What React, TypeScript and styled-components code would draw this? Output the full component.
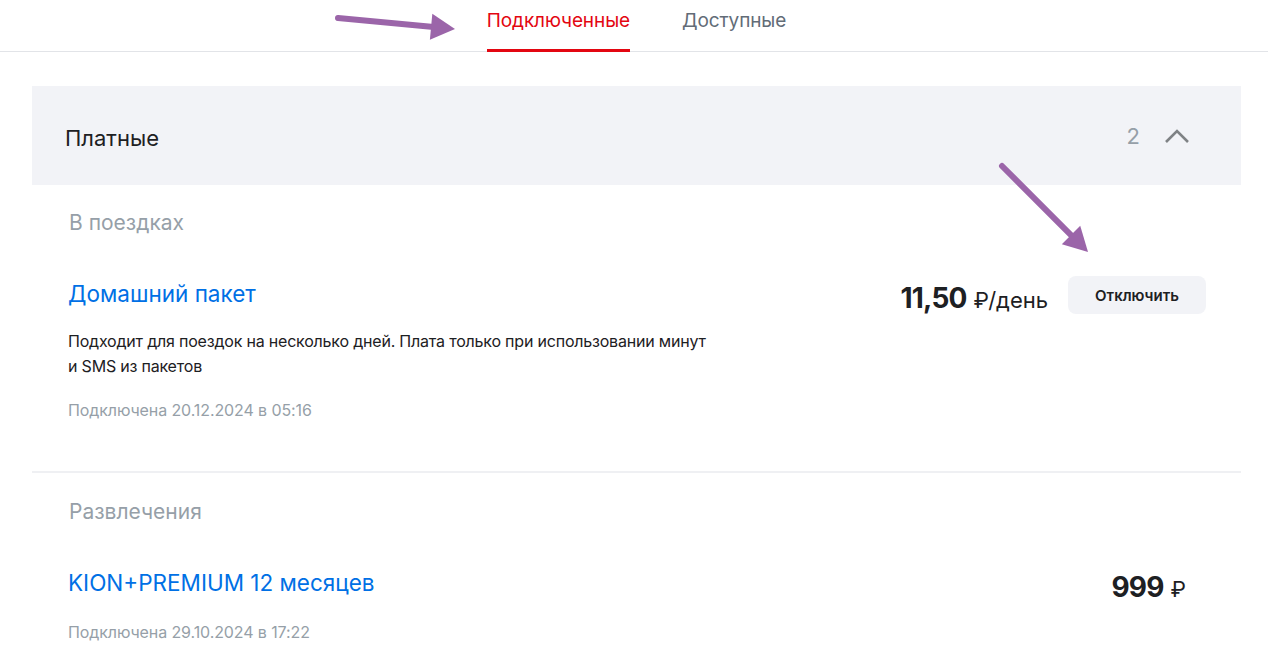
import React from 'react';
import styled, { createGlobalStyle } from 'styled-components';

const GlobalStyle = createGlobalStyle`
  html, body {
    margin: 0;
    padding: 0;
    background: #fff;
    font-family: 'Inter', 'Roboto', sans-serif;
    color: #1d2023;
  }
`;

const Page = styled.div`
  position: relative;
  width: 1268px;
  height: 659px;
  overflow: hidden;
`;

const TabBar = styled.div`
  display: flex;
  justify-content: center;
  gap: 52px;
  height: 51px;
  padding-left: 5px;
  border-bottom: 1px solid #e2e4e8;
`;

const Tab = styled.div<{ $active?: boolean }>`
  display: flex;
  align-items: flex-start;
  padding-top: 9px;
  box-sizing: border-box;
  height: 52px;
  margin-bottom: -1px;
  font-size: 19px;
  letter-spacing: -0.1px;
  color: ${({ $active }) => ($active ? '#e30611' : '#626c77')};
  border-bottom: 3px solid ${({ $active }) => ($active ? '#e30611' : 'transparent')};
`;

const Content = styled.div`
  padding: 34px 27px 0 32px;
`;

const GroupHeader = styled.div`
  display: flex;
  align-items: center;
  height: 99px;
  padding: 0 51px 0 33px;
  background: #f2f3f7;
`;

const GroupTitle = styled.div`
  flex: 1;
  font-size: 22px;
  padding-top: 4px;
  color: #1d2023;
`;

const Count = styled.span`
  font-size: 22px;
  color: #969fa8;
  margin-right: 24px;
`;

const Section = styled.div<{ $divider?: boolean }>`
  padding: ${({ $divider }) => ($divider ? 26 : 25)}px 35px 0 36px;
  border-top: ${({ $divider }) => ($divider ? '2px solid #eff0f3' : 'none')};
`;

const SectionTitle = styled.div`
  font-size: 21px;
  color: #969fa8;
  height: 28px;
  margin-left: 1px;
`;

const Item = styled.div<{ $bottom: number }>`
  padding-bottom: ${({ $bottom }) => $bottom}px;
`;

const ItemRow = styled.div<{ $top: number }>`
  display: flex;
  align-items: flex-start;
  margin-top: ${({ $top }) => $top}px;
`;

const ItemName = styled.div`
  flex: 1;
  font-size: 22.5px;
  color: #0070e5;
  line-height: 30px;
  padding-top: 4px;
`;

const Price = styled.div<{ $right?: number }>`
  display: flex;
  align-items: baseline;
  gap: 7px;
  margin-top: 6px;
  margin-right: ${({ $right }) => $right ?? 0}px;
`;

const Amount = styled.span`
  font-size: 28px;
  font-weight: 700;
  letter-spacing: -0.8px;
  color: #1d2023;
`;

const Unit = styled.span`
  font-size: 22px;
  color: #1d2023;
`;

const OffButton = styled.button`
  margin-left: 20px;
  margin-top: 1px;
  width: 138px;
  height: 38px;
  border: none;
  border-radius: 8px;
  background: #f2f3f7;
  font-family: 'Inter', 'Roboto', sans-serif;
  font-size: 15px;
  font-weight: 600;
  color: #1d2023;
  cursor: pointer;
`;

const Description = styled.div`
  margin-top: 14px;
  font-size: 16px;
  line-height: 25px;
  color: #1d2023;
  max-width: 650px;
  letter-spacing: -0.2px;
`;

const DateText = styled.div<{ $top: number }>`
  margin-top: ${({ $top }) => $top}px;
  font-size: 16px;
  color: #969fa8;
  letter-spacing: -0.1px;
`;

const Overlay = styled.svg`
  position: absolute;
  left: 0;
  top: 0;
  pointer-events: none;
`;

const Arrow = ({ x1, y1, x2, y2 }: { x1: number; y1: number; x2: number; y2: number }) => {
  const a = Math.atan2(y2 - y1, x2 - x1);
  const len = 24;
  const w = 13;
  const bx = x2 - len * Math.cos(a);
  const by = y2 - len * Math.sin(a);
  const px = -Math.sin(a) * w;
  const py = Math.cos(a) * w;
  return (
    <g>
      <line x1={x1} y1={y1} x2={bx} y2={by} stroke="#9b65a9" strokeWidth={6} strokeLinecap="round" />
      <polygon points={`${x2},${y2} ${bx + px},${by + py} ${bx - px},${by - py}`} fill="#9b65a9" />
    </g>
  );
};

const App: React.FC = () => (
  <Page>
    <GlobalStyle />
    <TabBar>
      <Tab $active>Подключенные</Tab>
      <Tab>Доступные</Tab>
    </TabBar>
    <Content>
      <GroupHeader>
        <GroupTitle>Платные</GroupTitle>
        <Count>2</Count>
        <svg width="26" height="14" viewBox="0 0 26 14">
          <path d="M2 13 L13 2 L24 13" fill="none" stroke="#7f8285" strokeWidth="2.6" />
        </svg>
      </GroupHeader>

      <Section>
        <SectionTitle>В поездках</SectionTitle>
        <Item $bottom={51}>
          <ItemRow $top={37}>
            <ItemName>Домашний пакет</ItemName>
            <Price>
              <Amount>11,50</Amount>
              <Unit>₽/день</Unit>
            </Price>
            <OffButton>Отключить</OffButton>
          </ItemRow>
          <Description>
            Подходит для поездок на несколько дней. Плата только при использовании минут и SMS из пакетов
          </Description>
          <DateText $top={21}>Подключена 20.12.2024 в 05:16</DateText>
        </Item>
      </Section>

      <Section $divider>
        <SectionTitle>Развлечения</SectionTitle>
        <Item $bottom={20}>
          <ItemRow $top={37}>
            <ItemName>KION+PREMIUM 12 месяцев</ItemName>
            <Price $right={20}>
              <Amount>999</Amount>
              <Unit>₽</Unit>
            </Price>
          </ItemRow>
          <DateText $top={18}>Подключена 29.10.2024 в 17:22</DateText>
        </Item>
      </Section>
    </Content>

    <Overlay width="1268" height="659">
      <Arrow x1={338} y1={18} x2={455} y2={29} />
      <Arrow x1={1002} y1={166} x2={1088} y2={252} />
    </Overlay>
  </Page>
);

export default App;
